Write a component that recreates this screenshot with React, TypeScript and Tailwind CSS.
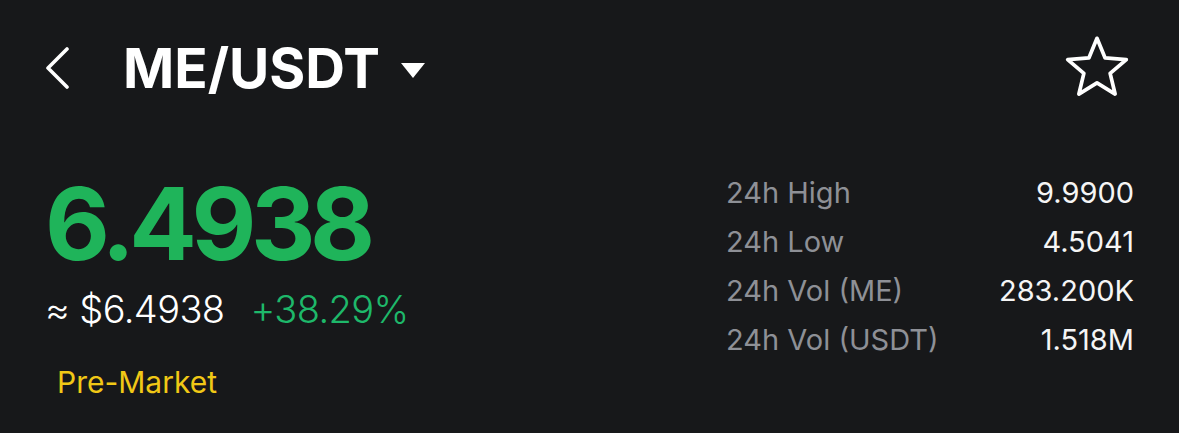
import React from "react";

const font = { fontFamily: "Inter, 'Noto Sans', sans-serif" };

function Chevron() {
  return (
    <svg width="26" height="42" viewBox="0 0 26 42" fill="none">
      <path d="M22 2 L3 21 L22 40" stroke="#ffffff" strokeWidth="3.6" strokeLinecap="round" strokeLinejoin="round" />
    </svg>
  );
}

function Caret() {
  return (
    <svg width="24" height="15" viewBox="0 0 24 15">
      <path d="M0 0 L24 0 L12 15 Z" fill="#ffffff" />
    </svg>
  );
}

function Star() {
  return (
    <svg width="68" height="68" viewBox="0 0 64 64" fill="none">
      <polygon
        points="32,5 39.64,23.48 59.58,25.04 44.36,38.02 49.05,57.46 32,47 14.95,57.46 19.64,38.02 4.42,25.04 24.36,23.48"
        stroke="#ffffff"
        strokeWidth="3.5"
        strokeLinejoin="round"
      />
    </svg>
  );
}

const stats = [
  ["24h High", "9.9900"],
  ["24h Low", "4.5041"],
  ["24h Vol (ME)", "283.200K"],
  ["24h Vol (USDT)", "1.518M"],
];

export default function App() {
  return (
    <div className="w-[1179px] h-[433px] bg-[#17181a] px-[45px] overflow-hidden" style={font}>
      <div className="h-[136px] flex items-center justify-between">
        <div className="flex items-center">
          <Chevron />
          <span className="ml-[52px] text-[55px] font-bold text-white leading-none tracking-[0px]">ME/USDT</span>
          <span className="ml-[21px] mt-[4px]"><Caret /></span>
        </div>
        <div className="mr-[3px] -mt-[2px]"><Star /></div>
      </div>
      <div className="flex justify-between items-start">
        <div className="flex flex-col">
          <div className="mt-[38px] text-[100px] font-bold leading-none text-[#1fb45a] tracking-[-5.5px]">6.4938</div>
          <div className="mt-[16px] flex items-baseline leading-none">
            <span className="text-[38px] text-white font-light tracking-[-0.6px]">≈ $6.4938</span>
            <span className="ml-[26px] text-[38px] text-[#1eb86a] font-light tracking-[-0.6px]">+38.29%</span>
          </div>
          <div className="mt-[39px] ml-[12px] text-[30px] leading-none text-[#f1c816]">Pre-Market</div>
        </div>
        <div className="mt-[32px] w-[408px] flex flex-col">
          {stats.map(([k, v]) => (
            <div key={k} className="flex justify-between leading-[49px] text-[29px]">
              <span className="text-[#8e9096]">{k}</span>
              <span className="text-[#f5f5f5]">{v}</span>
            </div>
          ))}
        </div>
      </div>
    </div>
  );
}
